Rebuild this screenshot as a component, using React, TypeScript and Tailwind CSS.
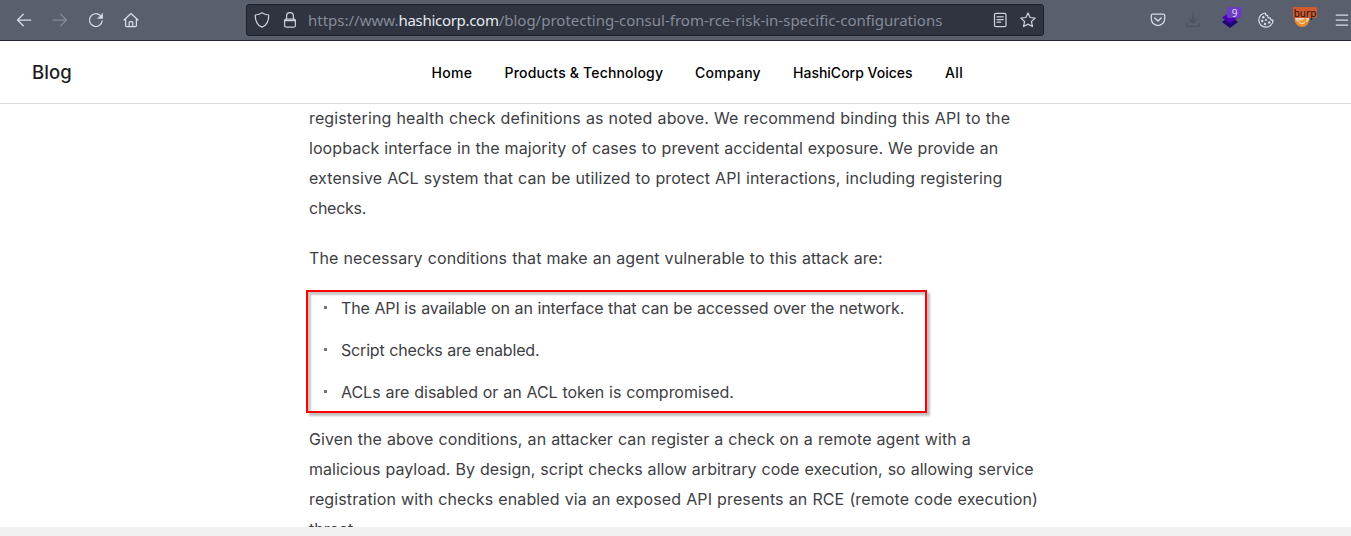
import type { ReactNode } from 'react';

function Icon({ children, className = '' }: { children: ReactNode; className?: string }) {
  return (
    <svg viewBox="0 0 16 16" className={`size-4 shrink-0 ${className}`} fill="none" stroke="currentColor" strokeWidth="1.25" strokeLinecap="round" strokeLinejoin="round">
      {children}
    </svg>
  );
}

function Toolbar() {
  return (
    <header className="flex h-[41px] shrink-0 items-center border-b border-[#23262f] bg-[#5a5f6d] pl-4 text-[#d8dce8]">
      <div className="flex w-[230px] gap-5">
        <Icon><path d="M14.8 8H1.5M7.3 2.2 1.5 8l5.8 5.8" /></Icon>
        <Icon className="text-[#858a98]"><path d="M1.2 8h13.3M8.7 2.2 14.5 8l-5.8 5.8" /></Icon>
        <Icon><path d="M14.2 8.8A6.4 6.4 0 1 1 12.2 3.4" /><path d="M14.6 1.5v4.9H9.8z" fill="currentColor" strokeWidth=".5" /></Icon>
        <Icon className="-ml-px"><path d="M1 8 8 1.5 15 8M2.6 7v6.4c0 .8.5 1.2 1.2 1.2h8.4c.7 0 1.2-.4 1.2-1.2V7M6.2 14.5v-3.9c0-.7.4-1 1-1h1.6c.6 0 1 .3 1 1v3.9" /></Icon>
      </div>
      <div className="flex h-8 w-[798px] shrink-0 items-center rounded-[3px] border border-[#1e212a] bg-[#2f3440] px-[7px] text-[#cbd0dc]">
        <Icon><path d="M8 .8c2 1.5 4 2 6.7 2.2C14.9 8.5 13.5 13 8 15.2 2.5 13 1.1 8.5 1.300 3 4 2.8 6 2.3 8 .8Z" /></Icon>
        <Icon className="ml-3"><rect x="2.6" y="7" width="10.8" height="8" rx="1.5" /><path d="M4.600 7V4a3.400 3.400 0 0 1 6.800 0v3M3 8.500h10" /></Icon>
        <div className="ml-[10px] flex-1 whitespace-nowrap font-['Noto_Sans',sans-serif] text-[15px] leading-5 text-[#858b99]">
          https://www.<span className="tracking-[-0.3px] text-[#e5e9f0]">hashicorp.com</span>/blog/protecting-consul-from-rce-risk-in-specific-configurations
        </div>
        <Icon><rect x="2.5" y="1.3" width="11.5" height="13.4" rx="1.5" /><path d="M5 4.800h6.300M5 7.500h6.300M5 10.200h3.700" /></Icon>
        <Icon className="ml-3"><path d="m8 .9 2.15 4.6 5 .6-3.700 3.450 1 5L8 12.100l-4.450 2.450 1-5L.850 6.100l5-.6z" /></Icon>
      </div>
      <div className="ml-[106px] flex w-[200px] items-center gap-5">
        <Icon><path d="M2.800 2h10.400c.900 0 1.500.600 1.500 1.500v3.300a6.700 6.700 0 0 1-13.400 0V3.500C1.300 2.600 1.900 2 2.800 2Z" /><path d="m4.800 6 3.200 3 3.200-3" strokeWidth="1.5" /></Icon>
        <Icon className="-ml-px text-[#4c5163]"><path d="M8 .8v9.700M4.200 6.900 8 10.700l3.800-3.800M1.500 11.500v1.200c0 1 .600 1.600 1.500 1.600h10c.900 0 1.500-.600 1.500-1.600v-1.200" /></Icon>
        <div className="relative ml-px size-4">
          <svg viewBox="0 0 16 16" className="size-4"><path d="m0 10 8-6 8 6-8 6z" fill="#1b0871" /><path d="m0 5.500 8-5.500 8 5.500-8 6z" fill="#4b00b8" /></svg>
          <span className="absolute -top-[5px] left-[5px] flex h-[11px] w-[15px] items-center justify-center rounded-[2px] bg-[#6a3dc3] font-['Noto_Sans',sans-serif] text-[10px] leading-none text-[#e6dcf5]">9</span>
        </div>
        <Icon>
          <path d="M7.400 1A7.100 7.100 0 1 0 15 8.200c-1.700.1-2.600-.8-2.600-2.200-1.700.3-3-.700-2.700-2.300C8.200 3.600 7.400 2.600 7.400 1Z" />
          <g fill="currentColor" stroke="none"><circle cx="5.3" cy="5.2" r="1.2" /><circle cx="4.2" cy="9" r="1.2" /><circle cx="7.9" cy="8" r="1.1" /><circle cx="7" cy="12" r="1.2" /><circle cx="11.2" cy="10.5" r="1.2" /></g>
        </Icon>
        <div className="relative size-4">
          <svg viewBox="0 0 16 16" className="size-4"><circle cx="8" cy="7.5" r="7.5" fill="#e88a2c" /><path d="M1 4h14v3.500L12.500 10H4L1.500 7.500z" fill="#dcd3ca" /><path d="m3.500 7 2 1.500 3-.5 2.500-2 2 1-2 4H5.500z" fill="#f29a36" /><path d="m5 10.500 3 1.500 3-1.500" stroke="#f7e7d4" fill="none" /></svg>
          <span className="absolute -top-[5px] -left-px flex h-[11px] w-6 items-center justify-center rounded-[1px] bg-[#ce5a2e] font-['Noto_Sans',sans-serif] text-[10px] leading-none text-[#1b1310]">burp</span>
        </div>
        <Icon className="ml-1"><path d="M2.200 3h11.600M2.200 8h11.600M2.200 13h11.600" /></Icon>
      </div>
    </header>
  );
}

function SiteNav() {
  return (
    <nav className="flex h-[63px] shrink-0 items-center border-b border-[#dcdcdc] bg-white pt-0.5 pl-8 font-medium text-black">
      <div className="w-[399.5px] text-[18.5px] tracking-[0.1px] text-[#1d1e23]">Blog</div>
      <div className="flex whitespace-nowrap text-[14px] leading-5">
        <a className="w-[73px] tracking-[0.3px]">Home</a>
        <a className="w-[190.5px] tracking-[0.18px]">Products &amp; Technology</a>
        <a className="w-[98px] tracking-[0.25px]">Company</a>
        <a className="w-[152px]">HashiCorp Voices</a>
        <a className="tracking-[0.4px]">All</a>
      </div>
    </nav>
  );
}

function Bullet({ children }: { children: ReactNode }) {
  return (
    <li className="flex items-center">
      <span className="mr-[14px] mb-0.5 ml-[15px] size-[3px] bg-[#6f7682]" />
      {children}
    </li>
  );
}

function Article() {
  return (
    <article className="min-h-0 flex-1 overflow-hidden bg-white pl-[309px] text-[16px] leading-[30px] whitespace-nowrap text-[#3d3e43]">
      <p className="-mt-px">
        <span className="block tracking-[0.13px] [word-spacing:0.4px]">registering health check definitions as noted above. We recommend binding this API to the</span>
        <span className="block tracking-[0.07px] [word-spacing:0.4px]">loopback interface in the majority of cases to prevent accidental exposure. We provide an</span>
        <span className="block tracking-[0.11px] [word-spacing:0.4px]">extensive ACL system that can be utilized to protect API interactions, including registering</span>
        <span className="block tracking-[-0.25px]">checks.</span>
      </p>
      <p className="mt-5 tracking-[0.1px] [word-spacing:0.4px]">The necessary conditions that make an agent vulnerable to this attack are:</p>
      <ul className="relative mt-5 flex flex-col gap-3">
        <Bullet><span className="tracking-[-0.14px] [word-spacing:0.4px]">The API is available on an interface that can be accessed over the network.</span></Bullet>
        <Bullet><span className="tracking-[-0.17px] [word-spacing:0.4px]">Script checks are enabled.</span></Bullet>
        <Bullet><span className="tracking-[-0.03px] [word-spacing:0.4px]">ACLs are disabled or an ACL token is compromised.</span></Bullet>
        <div className="pointer-events-none absolute -top-[3px] -left-[3px] h-[123px] w-[621px] border-2 border-[#fe0000] shadow-[3px_3px_2px_rgba(0,0,0,0.25),inset_3px_3px_2px_rgba(0,0,0,0.22)]" />
      </ul>
      <p className="mt-[17px]">
        <span className="block tracking-[0.09px] [word-spacing:0.4px]">Given the above conditions, an attacker can register a check on a remote agent with a</span>
        <span className="block tracking-[0.03px] [word-spacing:0.4px]">malicious payload. By design, script checks allow arbitrary code execution, so allowing service</span>
        <span className="block tracking-[0.12px] [word-spacing:0.4px]">registration with checks enabled via an exposed API presents an RCE (remote code execution)</span>
        <span className="block">threat.</span>
      </p>
    </article>
  );
}

export default function App() {
  return (
    <div className="flex h-[536px] w-[1351px] flex-col overflow-hidden bg-[#f1f1f1] font-[Inter,sans-serif]">
      <Toolbar />
      <SiteNav />
      <Article />
      <div className="h-[9px] shrink-0" />
    </div>
  );
}
